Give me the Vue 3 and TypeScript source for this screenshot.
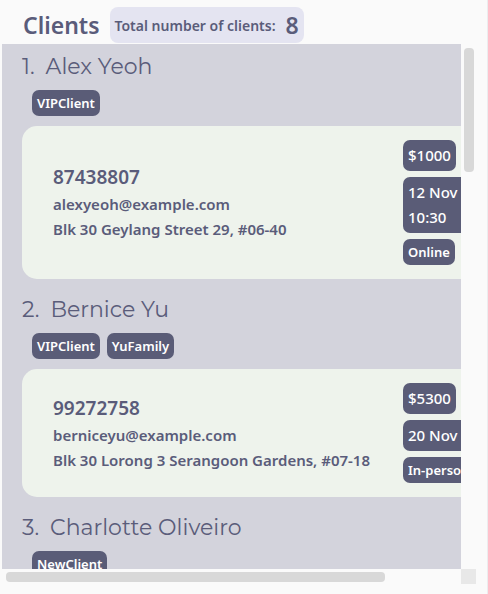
<script setup lang="ts">
interface Client {
  name: string
  tags: string[]
  phone: string
  email: string
  address: string
  balance: string
  meeting: string
  mode: string
}

const total = 8

const clients: Client[] = [
  {
    name: 'Alex Yeoh',
    tags: ['VIPClient'],
    phone: '87438807',
    email: 'alexyeoh@example.com',
    address: 'Blk 30 Geylang Street 29, #06-40',
    balance: '$1000',
    meeting: '12 Nov 10:30',
    mode: 'Online',
  },
  {
    name: 'Bernice Yu',
    tags: ['VIPClient', 'YuFamily'],
    phone: '99272758',
    email: 'berniceyu@example.com',
    address: 'Blk 30 Lorong 3 Serangoon Gardens, #07-18',
    balance: '$5300',
    meeting: '20 Nov',
    mode: 'In-person',
  },
  {
    name: 'Charlotte Oliveiro',
    tags: ['NewClient'],
    phone: '93210283',
    email: 'charlotte@example.com',
    address: 'Blk 11 Ang Mo Kio Street 74, #11-04',
    balance: '$200',
    meeting: '22 Nov',
    mode: 'Online',
  },
]
</script>

<template>
  <main class="panel">
    <header class="header">
      <h1 class="title">Clients</h1>
      <p class="total">
        <span>Total number of clients:</span>
        <strong class="count">{{ total }}</strong>
      </p>
    </header>
    <div class="scroller">
      <div class="viewport">
        <ol class="list">
          <li v-for="(client, index) in clients" :key="client.name" class="client">
            <h2 class="name">
              <span>{{ index + 1 }}.</span>
              <span>{{ client.name }}</span>
            </h2>
            <div class="tags">
              <span v-for="tag in client.tags" :key="tag" class="pill small">{{ tag }}</span>
            </div>
            <div class="card">
              <div class="info">
                <p class="phone">{{ client.phone }}</p>
                <p>{{ client.email }}</p>
                <p>{{ client.address }}</p>
              </div>
              <div class="meta">
                <span class="pill">{{ client.balance }}</span>
                <span class="pill meeting">{{ client.meeting }}</span>
                <span class="pill small">{{ client.mode }}</span>
              </div>
            </div>
          </li>
        </ol>
      </div>
      <div class="track vertical"><div class="thumb"></div></div>
      <div class="track horizontal"><div class="thumb"></div></div>
      <div class="corner"></div>
    </div>
  </main>
</template>

<style>
body {
  background: #fafafa;
}
</style>

<style scoped>
* {
  box-sizing: border-box;
}

.panel {
  display: flex;
  flex-direction: column;
  height: 100vh;
  padding: 0 11px 10px 2px;
  border-right: 1px solid #ececee;
  color: #5a5c7a;
  font: 600 15px/25px "Segoe UI", "Noto Sans", "Open Sans", sans-serif;
}

h1,
h2,
p,
ol {
  margin: 0;
  padding: 0;
}

.header {
  display: flex;
  align-items: center;
  gap: 10px;
  height: 44px;
  padding: 6px 0 0 21px;
  flex: none;
}

.title {
  font-size: 23px;
  font-weight: 600;
}

.total {
  display: flex;
  align-items: center;
  gap: 10px;
  height: 36px;
  padding: 0 5px;
  border-radius: 8px;
  background: #e4e4f1;
  font-size: 14px;
}

.count {
  font-size: 23px;
  font-weight: 600;
}

.scroller {
  display: grid;
  grid-template-columns: minmax(0, 1fr) 15px;
  grid-template-rows: minmax(0, 1fr) 15px;
  flex: 1;
  min-height: 0;
}

.viewport {
  overflow: auto;
  scrollbar-width: none;
  background: #d3d3dc;
}

.list {
  width: 119%;
  padding: 0 20px;
  list-style: none;
}

.client {
  padding: 8px 0;
}

.name {
  display: flex;
  gap: 11px;
  margin-bottom: 8px;
  font: 400 22px/30px Montserrat, Inter, sans-serif;
}

.tags {
  display: flex;
  gap: 7px;
  margin: 0 10px 10px;
}

.pill {
  padding: 3px 5px;
  border-radius: 7px;
  background: #5a5c77;
  color: #fff;
  font-weight: 500;
}

.small {
  font-size: 13px;
  font-weight: 600;
  line-height: 20px;
}

.card {
  display: flex;
  align-items: center;
  padding: 14px 31px;
  border-radius: 15px;
  background: #eef3ec;
}

.info {
  width: 350px;
  flex: none;
  white-space: nowrap;
}

.phone {
  font-size: 19px;
  line-height: 29px;
}

.meta {
  display: flex;
  flex-direction: column;
  align-items: flex-start;
  flex: 1;
  gap: 6px;
  min-width: 0;
}

.meeting {
  align-self: stretch;
}

.track {
  display: flex;
}

.vertical {
  padding: 4px 2px 4px 3px;
}

.horizontal {
  padding: 3px 4px 2px;
}

.thumb {
  border-radius: 4px;
  background: #d8d8d8;
}

.vertical .thumb {
  width: 100%;
  height: 24%;
}

.horizontal .thumb {
  width: 84%;
}

.corner {
  background: #e8e8e8;
}
</style>
